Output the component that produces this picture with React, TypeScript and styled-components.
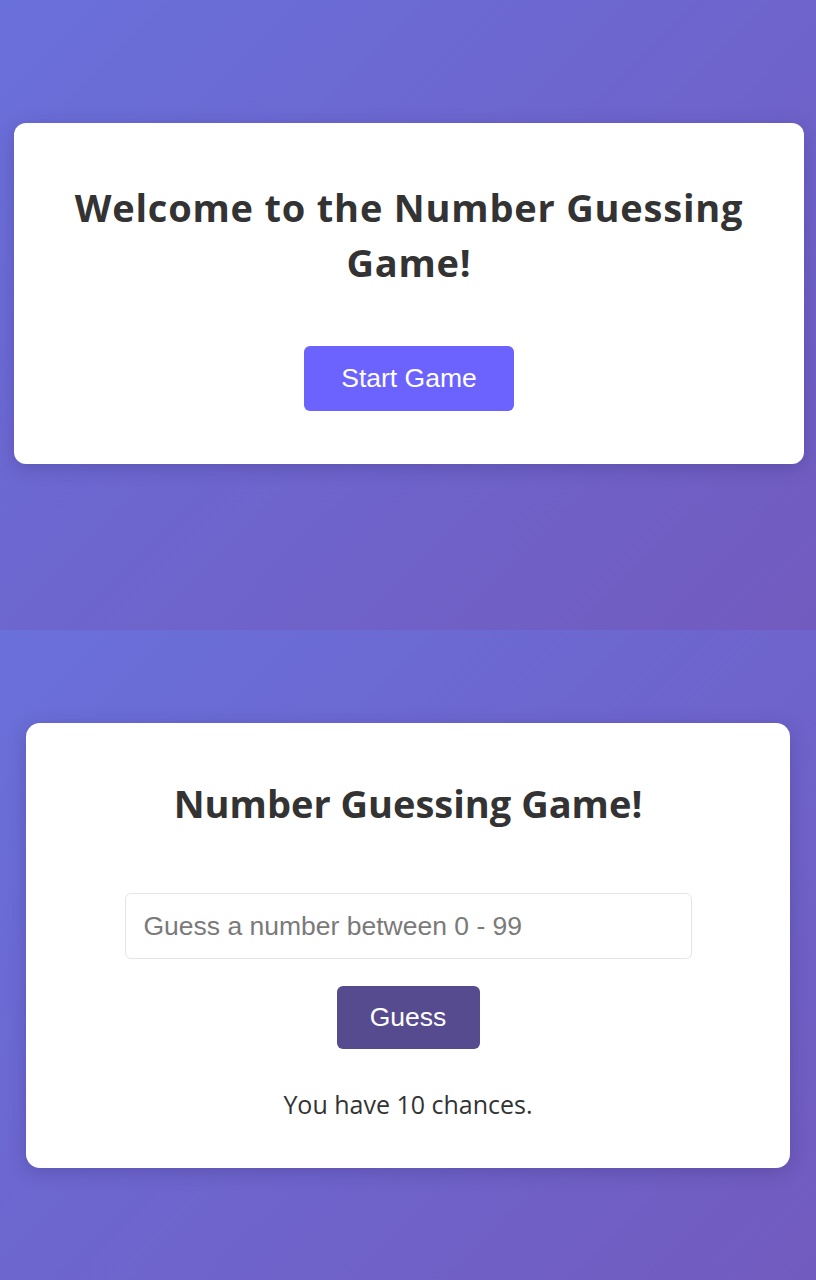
import React from "react";
import styled, { createGlobalStyle } from "styled-components";

const Global = createGlobalStyle`
  html, body { margin: 0; padding: 0; }
  body { font-family: "Open Sans", "Noto Sans", sans-serif; color: #333; }
  * { box-sizing: border-box; }
`;

const Page = styled.div`
  display: flex;
  flex-direction: column;
  width: 816px;
`;

const Screen = styled.section<{ $h: number; $pt: number; $pl: number; $pr: number }>`
  height: ${(p) => p.$h}px;
  padding: ${(p) => p.$pt}px ${(p) => p.$pr}px 0 ${(p) => p.$pl}px;
  background: linear-gradient(135deg, #6a70da 0%, #6d66cf 45%, #725bbf 100%);
  display: flex;
  flex-direction: column;
  align-items: stretch;
`;

const Card = styled.div<{ $pt: number; $pb: number; $r: number }>`
  background: #fff;
  border-radius: ${(p) => p.$r}px;
  box-shadow: 0 4px 18px rgba(40, 30, 90, 0.25);
  padding: ${(p) => p.$pt}px 40px ${(p) => p.$pb}px;
  display: flex;
  flex-direction: column;
  align-items: center;
`;

const Title = styled.h1<{ $lh: number; $ls: number }>`
  margin: 0;
  font-size: 38px;
  line-height: ${(p) => p.$lh}px;
  font-weight: 700;
  color: #333;
  text-align: center;
  letter-spacing: ${(p) => p.$ls}px;
`;

const Button = styled.button<{ $bg: number; $w: number; $h: number; $mt: number }>`
  margin-top: ${(p) => p.$mt}px;
  width: ${(p) => p.$w}px;
  height: ${(p) => p.$h}px;
  border: none;
  border-radius: 6px;
  background: ${(p) => (p.$bg === 1 ? "#6c63ff" : "#574b90")};
  color: #fff;
  font-family: "Liberation Sans", Arial, sans-serif;
  font-size: 26.5px;
  cursor: pointer;
`;

const Input = styled.input`
  margin-top: 65px;
  width: 567px;
  height: 66px;
  border: 1px solid #e4e4ec;
  border-radius: 6px;
  padding: 0 18px;
  font-family: "Liberation Sans", Arial, sans-serif;
  font-size: 26.5px;
  color: #333;
  outline: none;
  &::placeholder { color: #7a7a7a; }
`;

const Info = styled.p`
  margin: 39px 0 0;
  font-size: 25px;
  line-height: 32px;
  color: #333;
`;

export default function App() {
  return (
    <>
      <Global />
      <Page>
        <Screen $h={630} $pt={123} $pl={14} $pr={12}>
          <Card $pt={57} $pb={53} $r={12}>
            <Title $lh={55} $ls={0.8}>Welcome to the Number Guessing Game!</Title>
            <Button $bg={1} $w={210} $h={65} $mt={56}>Start Game</Button>
          </Card>
        </Screen>
        <Screen $h={650} $pt={93} $pl={26} $pr={26}>
          <Card $pt={55} $pb={48} $r={14}>
            <Title $lh={50} $ls={0}>Number Guessing Game!</Title>
            <Input placeholder="Guess a number between 0 - 99" />
            <Button $bg={2} $w={143} $h={63} $mt={27}>Guess</Button>
            <Info>You have 10 chances.</Info>
          </Card>
        </Screen>
      </Page>
    </>
  );
}
